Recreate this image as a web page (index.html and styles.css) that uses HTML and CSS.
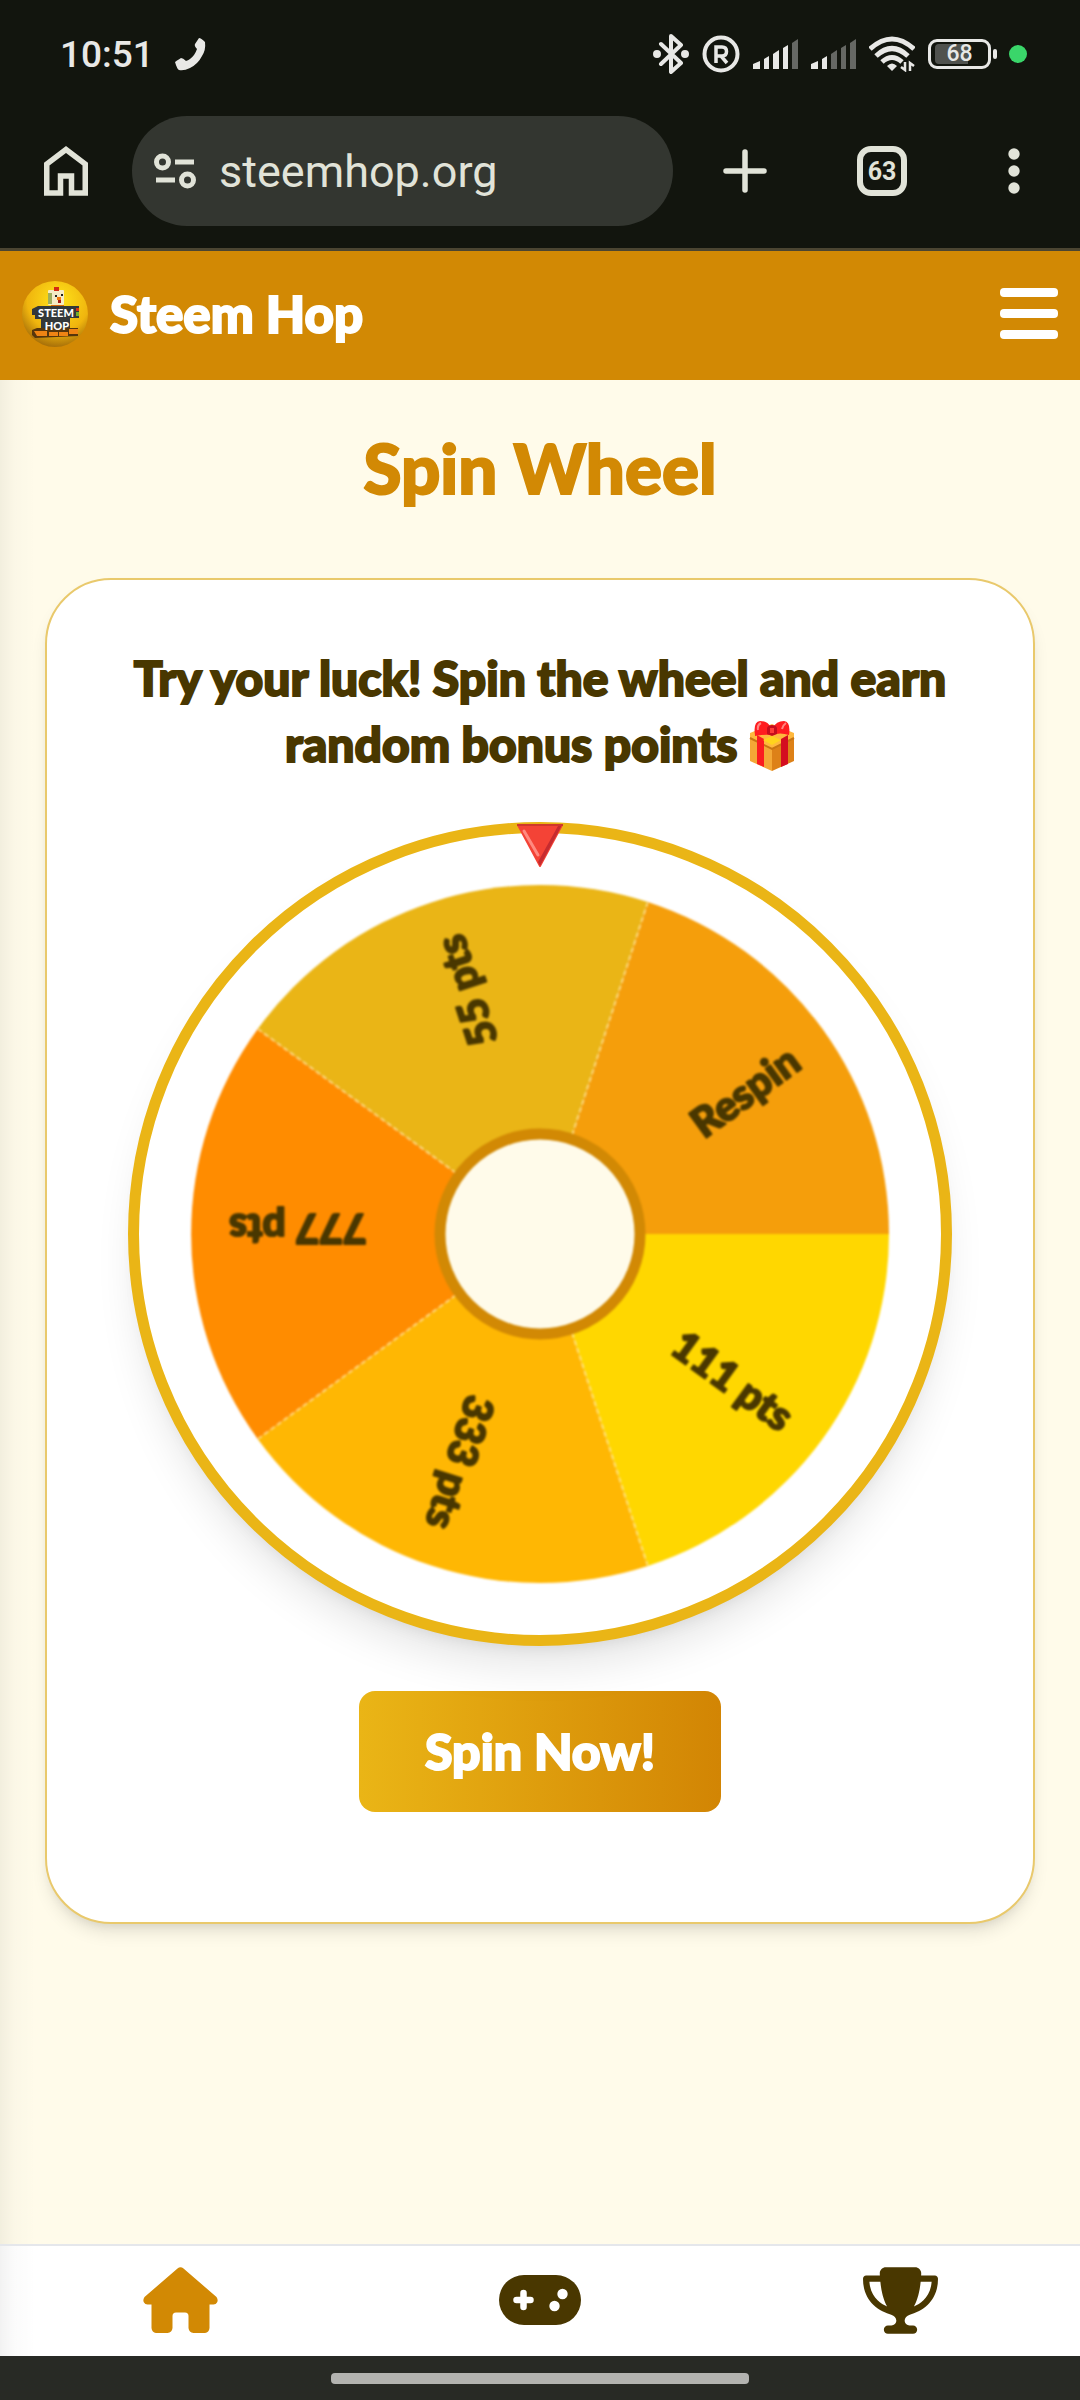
FILE: index.html
```html
<!DOCTYPE html>
<html lang="en">
<head>
<meta charset="utf-8">
<meta name="viewport" content="width=device-width, initial-scale=1">
<title>Steem Hop</title>
<link rel="stylesheet" href="styles.css">
</head>
<body>
<div class="chrome">
  <div class="status">
    <span class="clock">10:51</span>
    <svg class="call" width="32" height="33" viewBox="0 0 32 33" fill="#e8e8e6"><path d="M24 0Q26 0 30 4Q31 12 27 18Q23 26 15 30Q9 33 4 32Q2 31 0 24Q1 23 6 20Q8 20 11 23Q15 22 19 17Q21 14 22 11Q19 8 20 6Z"/></svg>
    <div class="status-icons">
      <svg width="36" height="40" viewBox="0 0 36 40" fill="none" stroke="#e8e8e6" stroke-width="4" stroke-linejoin="round" stroke-linecap="round"><path d="M8 10L28 29L18 38V2L28 11L8 30"/><circle cx="4" cy="20" r="2"/><circle cx="32" cy="20" r="2"/></svg>
      <svg width="38" height="38" viewBox="0 0 38 38" fill="none" stroke="#e8e8e6" stroke-width="4"><circle cx="19" cy="19" r="16.500"/><path d="M14 28V12H20Q24.500 12 24.500 16.500Q24.500 21 20 21H14M19 21L25 28" stroke-width="3.500"/></svg>
      <svg width="45" height="30" viewBox="0 0 45 30" fill="#e8e8e6"><path d="M0 25L7 22V30H0ZM11 20L16 17V30H11ZM20 15L26 11V30H20ZM30 9L35 6V30H30Z"/><path d="M39 4L45 0V30H39Z" fill="#666864"/></svg>
      <svg width="45" height="30" viewBox="0 0 45 30" fill="#e8e8e6"><path d="M0 25L7 22V30H0ZM11 20L16 17V30H11Z"/><path d="M20 15L26 11V30H20ZM30 9L35 6V30H30ZM39 4L45 0V30H39Z" fill="#666864"/></svg>
      <svg width="46" height="36" viewBox="0 0 46 36" fill="none" stroke="#e8e8e6" stroke-width="5"><path d="M1 13Q23 -7 45 13M7 20Q23 5 39 20M13 26Q23 17 33 26"/><path d="M18 30Q23 25 28 30L23 35Z" fill="#e8e8e6" stroke="none"/><path d="M36 26V34L32 31M41 35V27L45 30" stroke-width="2.500"/></svg>
      <span class="battery"><span class="battery-level">68</span></span>
      <span class="live-dot"></span>
    </div>
  </div>
  <div class="toolbar">
    <button class="tool" aria-label="Home page"><svg width="44" height="50" viewBox="0 0 44 50" fill="none" stroke="#e1e3d8" stroke-width="5.500"><path d="M2.750 47V18L22 3.500L41.250 18V47H27.500V30H16.500V47Z"/></svg></button>
    <div class="address">
      <svg width="42" height="36" viewBox="0 0 42 36" fill="none" stroke="#e1e3d8" stroke-width="5"><circle cx="8.500" cy="9" r="6"/><circle cx="33.500" cy="27" r="6"/><path d="M21 9H40M2 27H21"/></svg>
      <input class="url" type="text" value="steemhop.org" aria-label="Address">
    </div>
    <div class="tools">
      <button class="tool" aria-label="New tab"><svg width="44" height="44" viewBox="0 0 44 44" stroke="#e1e3d8" stroke-width="5.500" stroke-linecap="round"><path d="M22 3V41M3 22H41"/></svg></button>
      <button class="tool tabs" aria-label="Open tabs">63</button>
      <button class="tool more" aria-label="More"><svg width="12" height="46" viewBox="0 0 12 46" fill="#e1e3d8"><circle cx="6" cy="6" r="5.700"/><circle cx="6" cy="23" r="5.700"/><circle cx="6" cy="40" r="5.700"/></svg></button>
    </div>
  </div>
</div>

<header class="site-header">
  <a class="brand" href="#">
    <svg class="logo" width="66" height="66" viewBox="0 0 66 66">
      <defs><radialGradient id="ball" cx=".55" cy=".3" r=".72"><stop offset="0" stop-color="#ffe51a"/><stop offset=".65" stop-color="#f0b50e"/><stop offset="1" stop-color="#a26b09"/></radialGradient></defs>
      <circle cx="33" cy="33" r="33" fill="url(#ball)"/>
      <path d="M29 24H42V29H29Z" fill="#d96a0a"/>
      <rect x="26" y="9" width="16" height="15" rx="1" fill="#f5ebc4"/><path d="M26 12h4v11h-4z" fill="#9fae5c"/><path d="M32 6h5v4h-5z" fill="#d32a12"/>
      <path d="M33 14h2v2h-2zM39 13h2v2h-2z" fill="#222"/><path d="M35 16h4v3h-4z" fill="#f47b0a"/><path d="M36 19h3v3h-3z" fill="#a81a12"/>
      <path d="M10 28L16 25H57V37H48V50H19V38H13V34H10Z" fill="#34383a"/>
      <path d="M54 27h3v3h-3z" fill="#d53312"/><path d="M54 31h3v4h-3z" fill="#75ad28"/>
      <path d="M10 49L15 47H56V55L13 57L10 54Z" fill="#56360c"/><path d="M12 50H25V55H15ZM27 51H36V55H27ZM37 51H46V55H37ZM47 48H56V53H47Z" fill="#ef8414"/>
      <text class="logo-text" x="34" y="36">STEEM</text><text class="logo-text" x="35" y="49">HOP</text>
    </svg>
    <span class="brand-name">Steem Hop</span>
  </a>
  <button class="menu" aria-label="Menu"><span></span><span></span><span></span></button>
</header>

<main class="page">
  <h1>Spin Wheel</h1>
  <section class="card">
    <p class="intro">Try your luck! Spin the wheel and earn<br>random bonus points
      <svg class="gift" width="46" height="50" viewBox="0 0 46 50"><path d="M1 13L23 22V50L1 40Z" fill="#f4a836"/><path d="M23 22L45 13V40L23 50Z" fill="#dd8118"/><path d="M1 12L23 3L45 12V17L23 28L1 17Z" fill="#ffb83d"/><path d="M1 17L23 28L45 17" fill="none" stroke="#c87512" stroke-width="2"/><path d="M8 14L15 18V46L8 43Z" fill="#fa1d20"/><path d="M32 18L39 14V43L32 46Z" fill="#d40d20"/><path d="M23 15L32 19L23 24L14 19Z" fill="#ffd31d"/><path d="M6 14Q4 1 11 0Q19 0 22 7H24Q27 0 35 0Q42 1 40 14Q31 11 23 14Q15 13 6 15Z" fill="#ff1c20"/><path d="M18 7Q19 4 23 4Q27 4 28 7V13L23 15L18 13Z" fill="#c60d1d"/><path d="M21 7H25V12H21Z" fill="#ff3b38"/><path d="M9 9Q8 4 12 2M33 8Q34 4 37 2" fill="none" stroke="#ff8580" stroke-width="2"/></svg></p>
    <div class="wheel">
      <svg class="disc" viewBox="-401 -401 802 802">
        <path fill="#ffd700" d="M0 0L349 0A349 349 0 0 1 107.800 332Z"/>
        <path fill="#ffb703" d="M0 0L107.800 332A349 349 0 0 1 -282.300 205Z"/>
        <path fill="#ff8c00" d="M0 0L-282.300 205A349 349 0 0 1 -282.300 -205Z"/>
        <path fill="#eab516" d="M0 0L-282.300 -205A349 349 0 0 1 107.800 -332Z"/>
        <path fill="#f59e0b" d="M0 0L107.800 -332A349 349 0 0 1 349 0Z"/>
        <path fill="none" stroke="#ffe9a8" stroke-opacity=".7" stroke-width="2" stroke-dasharray="5 3" d="M0 0L107.500 331M0 0L-281.500 204.500M0 0L-281.500 -204.500M0 0L107.500 -331"/>
        <g class="prizes">
          <text x="311" y="20" transform="rotate(36)">111 pts</text>
          <text x="311" y="20" transform="rotate(108)">333 pts</text>
          <text x="311" y="20" transform="rotate(180)">777 pts</text>
          <text x="311" y="20" transform="rotate(252)">55 pts</text>
          <text x="311" y="20" transform="rotate(324)">Respin</text>
        </g>
        <circle r="100" fill="#fffbea" stroke="#d28904" stroke-width="11"/>
      </svg>
      <svg class="pointer" width="48" height="44" viewBox="0 0 48 44"><path d="M2 1H46L24 42Z" fill="#f44336" stroke="#f44336" stroke-width="2" stroke-linejoin="round"/><path d="M46 1L24 42L22 38L42 2Z" fill="#c62b2f"/><path d="M1 0H47V2H1Z" fill="#cf382c"/><path d="M8 7L22 31" stroke="#ff8a80" stroke-width="3" stroke-linecap="round"/></svg>
    </div>
    <button class="spin">Spin Now!</button>
  </section>
</main>

<nav class="tabbar">
  <a href="#" aria-label="Home"><svg width="75" height="66" viewBox="0 0 75 66" fill="#d28904"><path d="M34.500 1.500Q37.500 -1 40.500 1.500L73.500 30Q75.500 33 74 35.500Q73 37.500 70.500 37.500H66.500V61Q66 65.500 62 66H50.500Q46 65.500 45.500 61V49Q45.500 45.500 42 45.500H33Q29.500 45.500 29.500 49V61Q29 65.500 24.500 66H13Q9 65.500 8.500 61V37.500H4.500Q2 37.500 1 35.500Q-.500 33 1.500 30Z"/></svg></a>
  <a href="#" aria-label="Games"><svg width="82" height="50" viewBox="0 0 82 50"><rect width="82" height="50" rx="25" fill="#493700"/><path d="M24.500 18V32M17.500 25H31.500" stroke="#fff" stroke-width="6.500" stroke-linecap="round"/><circle cx="63.500" cy="19" r="5.200" fill="#fff"/><circle cx="55.500" cy="31" r="5.200" fill="#fff"/></svg></a>
  <a href="#" aria-label="Leaderboard"><svg width="75" height="67" viewBox="0 0 576 512" fill="#493700"><path d="M400 0H176c-26.500 0-48.100 21.800-47.100 48.200c.2 5.300 .4 10.600 .7 15.800H24C10.700 64 0 74.700 0 88c0 92.600 33.500 157 78.500 200.700c44.300 43.100 98.300 64.800 138.100 75.800c23.400 6.500 39.400 26 39.400 45.600c0 20.900-17 37.900-37.900 37.900H192c-17.700 0-32 14.300-32 32s14.300 32 32 32H384c17.700 0 32-14.300 32-32s-14.300-32-32-32H357.900C337 448 320 431 320 410.100c0-19.600 15.900-39.200 39.400-45.600c39.900-11 93.900-32.700 138.200-75.800C542.500 245 576 180.600 576 88c0-13.300-10.700-24-24-24H446.400c.3-5.200 .5-10.400 .7-15.800C448.100 21.800 426.500 0 400 0zM48.900 112h84.400c9.100 90.100 29.200 150.300 51.900 190.600c-24.900-11-50.800-26.500-73.200-48.300c-32-31.100-58-76-63-142.300zM464.100 254.300c-22.400 21.800-48.300 37.300-73.200 48.300c22.700-40.300 42.800-100.500 51.900-190.600h84.400c-5.100 66.300-31.100 111.200-63 142.300z"/></svg></a>
</nav>
<div class="gesture"><span></span></div>
</body>
</html>
```
FILE: styles.css
```css
* { box-sizing: border-box; }
body {
  margin: 0;
  min-height: 100vh;
  display: flex;
  flex-direction: column;
  background: #fffbea;
  color: #493700;
  font-family: Lato, "Liberation Sans", sans-serif;
}
svg { display: block; flex: none; }
button { border: 0; padding: 0; background: none; font: inherit; color: inherit; }
a { color: inherit; text-decoration: none; }

/* Phone status row and browser toolbar */
.chrome {
  background: #12150e;
  border-bottom: 3px solid #4b4532;
  font-family: Roboto, "Liberation Sans", sans-serif;
}
.status {
  height: 108px;
  display: flex;
  align-items: center;
  gap: 21px;
  padding: 0 53px 0 60px;
  color: #e8e8e6;
}
.clock { font-size: 37px; font-weight: 500; }
.status-icons { margin-left: auto; display: flex; align-items: center; gap: 13px; }
.battery {
  position: relative;
  width: 63px;
  height: 30px;
  padding: 2px 4px;
  border: 3px solid #e8e8e6;
  border-radius: 9px;
}
.battery::after {
  content: "";
  position: absolute;
  right: -9px;
  top: 7px;
  width: 4px;
  height: 10px;
  border-radius: 2px;
  background: #e8e8e6;
}
.battery-level {
  display: block;
  height: 20px;
  background: linear-gradient(90deg, #50524e 68%, transparent 68%);
  border-radius: 4px;
  font-size: 23px;
  font-weight: 500;
  line-height: 20px;
  text-align: center;
}
.live-dot { width: 18px; height: 18px; margin-left: 5px; border-radius: 50%; background: #3ad66a; }
.toolbar {
  height: 140px;
  display: flex;
  align-items: center;
  gap: 44px;
  padding: 0 60px 14px 44px;
  color: #e1e3d8;
}
.tool { display: grid; place-items: center; flex: none; }
.address {
  flex: 1;
  min-width: 0;
  height: 110px;
  display: flex;
  align-items: center;
  gap: 23px;
  padding: 0 22px;
  border-radius: 55px;
  background: #333630;
}
.url {
  flex: 1;
  min-width: 0;
  border: 0;
  padding: 0;
  background: none;
  color: inherit;
  font: 400 45px Roboto, "Liberation Sans", sans-serif;
}
.tools { display: flex; align-items: center; gap: 90px; margin-left: 6px; }
.more { padding-left: 11px; }
.tabs {
  width: 50px;
  height: 50px;
  border: 6px solid #e1e3d8;
  border-radius: 14px;
  font-size: 25px;
  font-weight: 700;
}

/* Site header */
.site-header {
  display: flex;
  align-items: center;
  justify-content: space-between;
  height: 129px;
  padding: 0 22px 4px;
  background: #d28904;
  color: #fff;
}
.brand { display: flex; align-items: center; gap: 22px; }
.logo-text {
  font: 900 11px Lato, sans-serif;
  fill: #fff;
  text-anchor: middle;
}
.brand-name { font-size: 51px; line-height: 60px; }
.brand-name, h1, .intro, .spin {
  font-weight: 900;
  -webkit-text-stroke: 2px currentColor;
}
.menu { display: flex; flex-direction: column; gap: 12px; }
.menu span { width: 58px; height: 9px; border-radius: 4px; background: #fff; }

/* Content */
.page { flex: 1; padding: 44px 45px; }
h1 {
  margin: 0 0 67px;
  color: #d28904;
  font-size: 69px;
  line-height: 87px;
  text-align: center;
}
.card {
  display: flex;
  flex-direction: column;
  align-items: center;
  gap: 45px;
  padding: 65px 66px 110px;
  border: 2px solid #e9c96c;
  border-radius: 66px;
  background: #fff;
  box-shadow: 0 11px 17px -3px rgba(0, 0, 0, .1), 0 6px 11px -6px rgba(0, 0, 0, .1);
}
.intro {
  margin: 0;
  font-size: 48px;
  line-height: 66px;
  text-align: center;
}
.gift { display: inline-block; vertical-align: -9px; }
.wheel {
  position: relative;
  width: 100%;
  max-width: 824px;
  aspect-ratio: 1;
  border: 11px solid #eab516;
  border-radius: 50%;
  background: #fff;
  box-shadow: 0 28px 41px -8px rgba(0, 0, 0, .1), 0 11px 17px -11px rgba(0, 0, 0, .1);
}
.disc { width: 100%; height: 100%; filter: blur(1px); }
.prizes {
  font: 900 41px Lato, sans-serif;
  fill: #493700;
  stroke: #493700;
  stroke-width: 2px;
  stroke-linejoin: round;
  text-anchor: end;
}
.pointer { position: absolute; top: -9px; left: 50%; transform: translateX(-50%); }
.spin {
  padding: 0 66px;
  border-radius: 16px;
  background: linear-gradient(90deg, #eab516, #d28504);
  color: #fff;
  font-size: 50px;
  line-height: 121px;
}

/* Bottom navigation */
.tabbar {
  display: grid;
  grid-template-columns: repeat(3, 1fr);
  place-items: center;
  height: 112px;
  padding-bottom: 2px;
  border-top: 2px solid #e5e7eb;
  background: #fff;
}
.gesture { display: grid; place-items: center; height: 44px; background: #282a25; }
.gesture span { width: 418px; height: 11px; border-radius: 4px; background: #b3b3b0; }

.page, .tabbar { position: relative; }
.page::before, .tabbar::before {
  content: "";
  position: absolute;
  inset: 0 auto 0 0;
  width: 36px;
  background: linear-gradient(90deg, rgba(0, 0, 0, .05), rgba(0, 0, 0, .015) 40%, transparent);
}
```
